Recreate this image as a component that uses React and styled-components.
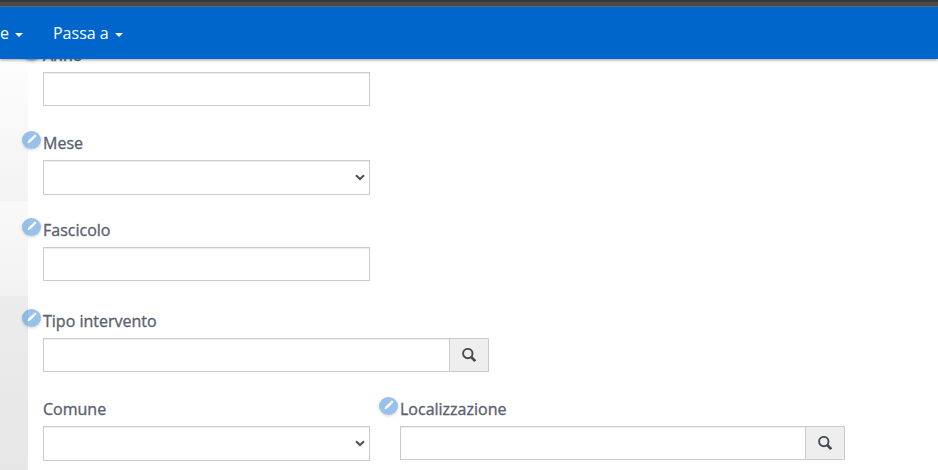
import React from "react";
import styled, { createGlobalStyle } from "styled-components";

const GlobalStyle = createGlobalStyle`
  * { box-sizing: border-box; }
  body { margin: 0; background: #fff; font-family: "Open Sans", "Noto Sans", sans-serif; }
`;

const Page = styled.div`
  display: flex;
  flex-direction: column;
  height: 470px;
  overflow: hidden;
`;

const TopStrip = styled.div`
  flex: none;
  height: 7px;
  background: linear-gradient(#373737 0 2px, #4a4a4a 2px 6px, #696b6e 6px);
`;

const NavBar = styled.nav`
  position: relative;
  z-index: 2;
  flex: none;
  display: flex;
  gap: 30px;
  height: 52px;
  background: #06c;
  box-shadow: 0 1px 3px rgba(0, 0, 0, 0.4);
`;

const NavItem = styled.a`
  display: flex;
  align-items: center;
  gap: 6px;
  height: 52px;
  color: #fff;
  font-size: 16px;
  white-space: nowrap;
`;

const Caret = styled.span`
  margin-top: 4px;
  border: 4px solid transparent;
  border-top-color: #fff;
  border-bottom: 0;
`;

const Content = styled.div`
  flex: 1;
  min-height: 0;
  display: flex;
`;

const SidePanel = styled.aside`
  flex: none;
  width: 28px;
  background: linear-gradient(
    #fdfdfd 0, #f3f3f3 142px,
    #f9f9f9 142px, #f2f2f2 237px,
    #ececec 237px, #e6e6e6 411px
  );
`;

const Form = styled.form`
  margin-top: -15px;
  padding-left: 15px;
`;

const Row = styled.div`
  display: flex;
  gap: 30px;
  margin-bottom: ${(p) => p.$gap || 0}px;
`;

const Field = styled.div`
  width: ${(p) => p.$width || 327}px;
`;

const Label = styled.label`
  position: relative;
  display: block;
  height: 28px;
  line-height: 22px;
  color: #5a6170;
  font-size: 16px;
  font-weight: 400;
  -webkit-text-stroke: 0.35px #5a6170;
  white-space: nowrap;
`;

const EditBadge = styled.span`
  position: absolute;
  left: -21px;
  top: -1px;
  display: flex;
  align-items: center;
  justify-content: center;
  width: 19px;
  height: 18px;
  padding-bottom: 2px;
  border-radius: 50%;
  background: rgba(51, 133, 214, 0.5);
  box-shadow: 0 1px 3px rgba(0, 0, 0, 0.18);
`;

const Control = styled.div`
  display: flex;
  align-items: center;
  justify-content: flex-end;
  flex: 1;
  height: ${(p) => p.$height || 34}px;
  padding-right: 4px;
  border: 1px solid #ccc;
  background: #fff;
  box-shadow: inset 0 1px 1px rgba(0, 0, 0, 0.075);
`;

const InputGroup = styled.div`
  display: flex;
`;

const SearchButton = styled.button`
  display: flex;
  align-items: center;
  justify-content: center;
  width: 39px;
  height: 34px;
  padding: 0;
  border: 1px solid #ccc;
  border-left: 0;
  background: #eee;
`;

const Pencil = () => (
  <svg width="10" height="10" viewBox="0 0 11 11" fill="#fff">
    <path d="M.6 10.2 L1.4 7.4 L6.8 2.2 L8.8 4.2 L3.4 9.4 Z" />
    <path d="M7.2 1.9 L8.3 .8 Q8.8 .4 9.4 .9 L10.1 1.6 Q10.5 2.2 10.1 2.7 L9.1 3.8 Z" />
  </svg>
);

const Chevron = () => (
  <svg width="10" height="7" viewBox="0 0 10 7" fill="none" stroke="#505050" strokeWidth="2">
    <path d="M1 1.2 L5 5 L9 1.2" />
  </svg>
);

const Magnifier = () => (
  <svg width="14" height="14" viewBox="0 0 14 14" fill="none" stroke="#454b51">
    <circle cx="5.8" cy="5.6" r="4.7" strokeWidth="1.9" />
    <path d="M9.2 9 L13.2 13" strokeWidth="2.6" />
  </svg>
);

function FormField({ label, editable, select, search, width }) {
  return (
    <Field $width={width}>
      <Label>
        {editable && <EditBadge><Pencil /></EditBadge>}
        {label}
      </Label>
      <InputGroup>
        <Control $height={select ? 35 : 34}>{select && <Chevron />}</Control>
        {search && <SearchButton type="button" aria-label="Cerca"><Magnifier /></SearchButton>}
      </InputGroup>
    </Field>
  );
}

export default function App() {
  return (
    <Page>
      <GlobalStyle />
      <TopStrip />
      <NavBar>
        <NavItem>e<Caret /></NavItem>
        <NavItem>Passa a<Caret /></NavItem>
      </NavBar>
      <Content>
        <SidePanel />
        <Form>
          <Row $gap={26}><FormField label="Anno" editable /></Row>
          <Row $gap={24}><FormField label="Mese" editable select /></Row>
          <Row $gap={29}><FormField label="Fascicolo" editable /></Row>
          <Row $gap={26}><FormField label="Tipo intervento" editable search width={446} /></Row>
          <Row>
            <FormField label="Comune" select />
            <FormField label="Localizzazione" editable search width={445} />
          </Row>
        </Form>
      </Content>
    </Page>
  );
}
